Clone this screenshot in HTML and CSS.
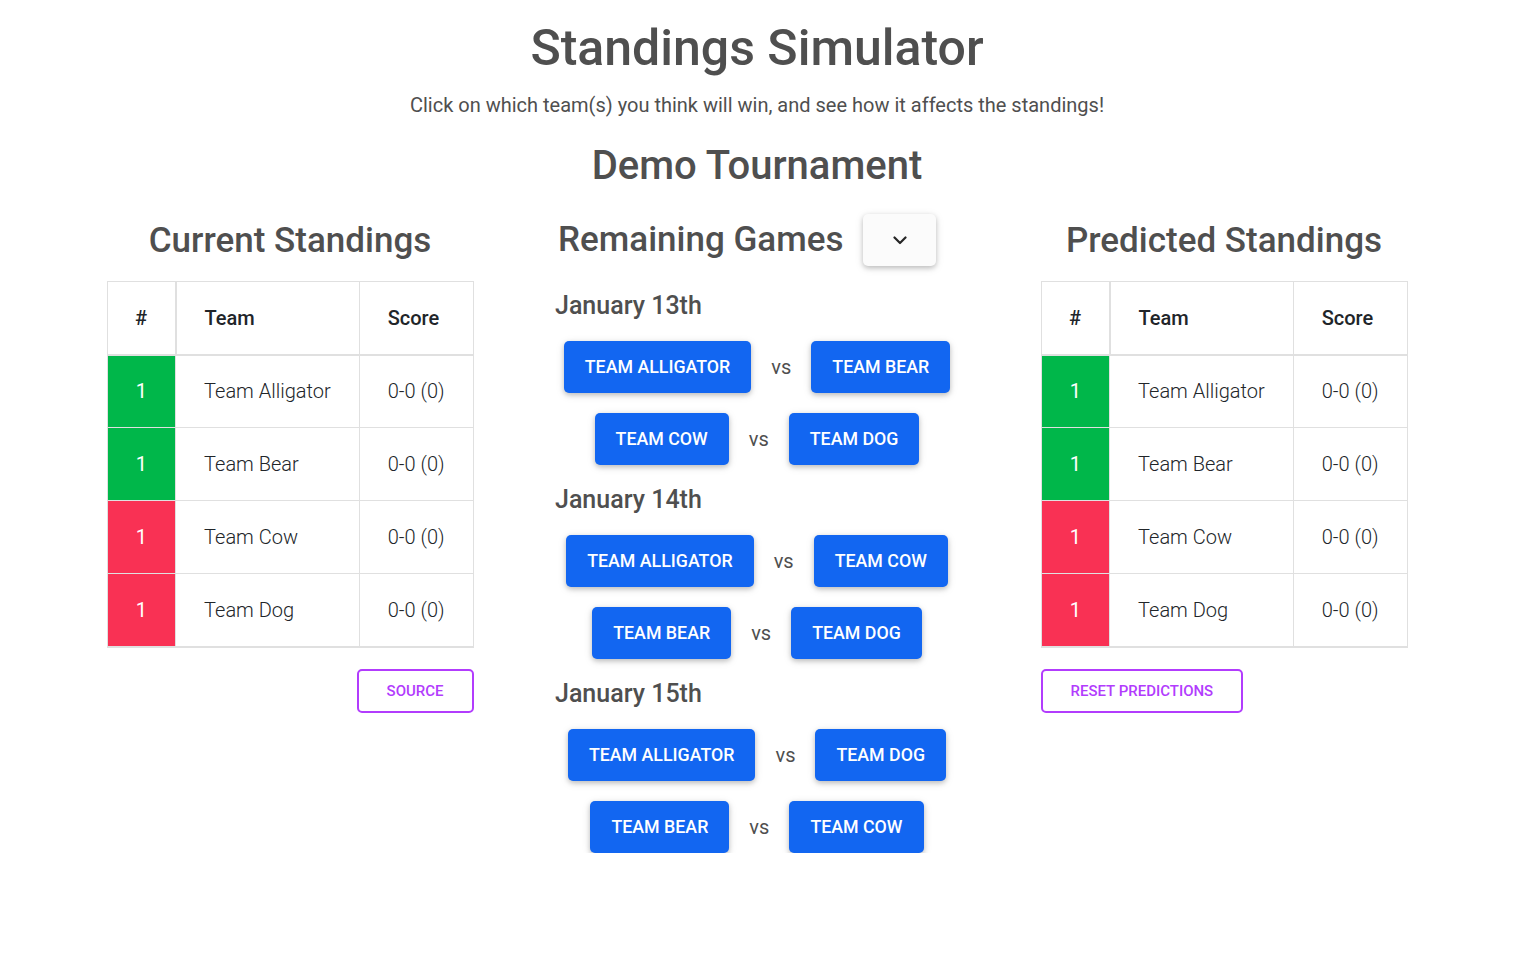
FILE: index.html
```html
<!DOCTYPE html>
<html lang="en">
<head>
    <meta charset="UTF-8">
    <meta name="viewport" content="width=device-width, initial-scale=1.0">
    <title>Standings Simulator</title>
    <link rel="stylesheet" href="styles.css">
</head>
<body>
<div class="page">
    <h1 class="title">Standings Simulator</h1>
    <p class="subtitle">Click on which team(s) you think will win, and see how it affects the standings!</p>
    <h2 class="tournament">Demo Tournament</h2>

    <div class="columns">
        <!-- current standings -->
        <div class="col">
            <div class="standings">
                <h3 class="col-title">Current Standings</h3>
                <table class="table">
                    <thead>
                        <tr><th class="rank-col">#</th><th class="team-col">Team</th><th>Score</th></tr>
                    </thead>
                    <tbody>
                        <tr><td class="rank win">1</td><td>Team Alligator</td><td>0-0 (0)</td></tr>
                        <tr><td class="rank win">1</td><td>Team Bear</td><td>0-0 (0)</td></tr>
                        <tr><td class="rank lose">1</td><td>Team Cow</td><td>0-0 (0)</td></tr>
                        <tr><td class="rank lose">1</td><td>Team Dog</td><td>0-0 (0)</td></tr>
                    </tbody>
                </table>
                <div class="actions actions-right">
                    <button class="btn-outline">Source</button>
                </div>
            </div>
        </div>

        <!-- remaining games -->
        <div class="col">
            <div class="games">
                <div class="games-head">
                    <h3 class="col-title">Remaining Games</h3>
                    <button class="btn-light" aria-label="toggle">
                        <svg width="14" height="9" viewBox="0 0 14 9"><polyline points="1.5,1.5 7,7 12.5,1.5" fill="none" stroke="#262626" stroke-width="2.2" stroke-linecap="round" stroke-linejoin="round"/></svg>
                    </button>
                </div>
                <div class="days">
                    <h5 class="day-title">January 13th</h5>
                    <div class="match"><button class="btn-team">Team Alligator</button><span class="vs">vs</span><button class="btn-team">Team Bear</button></div>
                    <div class="match"><button class="btn-team">Team Cow</button><span class="vs">vs</span><button class="btn-team">Team Dog</button></div>

                    <h5 class="day-title">January 14th</h5>
                    <div class="match"><button class="btn-team">Team Alligator</button><span class="vs">vs</span><button class="btn-team">Team Cow</button></div>
                    <div class="match"><button class="btn-team">Team Bear</button><span class="vs">vs</span><button class="btn-team">Team Dog</button></div>

                    <h5 class="day-title">January 15th</h5>
                    <div class="match"><button class="btn-team">Team Alligator</button><span class="vs">vs</span><button class="btn-team">Team Dog</button></div>
                    <div class="match"><button class="btn-team">Team Bear</button><span class="vs">vs</span><button class="btn-team">Team Cow</button></div>
                </div>
            </div>
        </div>

        <!-- predicted standings -->
        <div class="col">
            <div class="standings">
                <h3 class="col-title">Predicted Standings</h3>
                <table class="table">
                    <thead>
                        <tr><th class="rank-col">#</th><th class="team-col">Team</th><th>Score</th></tr>
                    </thead>
                    <tbody>
                        <tr><td class="rank win">1</td><td>Team Alligator</td><td>0-0 (0)</td></tr>
                        <tr><td class="rank win">1</td><td>Team Bear</td><td>0-0 (0)</td></tr>
                        <tr><td class="rank lose">1</td><td>Team Cow</td><td>0-0 (0)</td></tr>
                        <tr><td class="rank lose">1</td><td>Team Dog</td><td>0-0 (0)</td></tr>
                    </tbody>
                </table>
                <div class="actions">
                    <button class="btn-outline">Reset Predictions</button>
                </div>
            </div>
        </div>
    </div>
</div>
</body>
</html>
```

FILE: styles.css
```css
body {
    margin: 0;
    background-color: #fff;
    font-family: Roboto, "Liberation Sans", Arial, sans-serif;
    color: #4f4f4f;
}
.page {
    width: 1514px;
    padding-top: 18px;
}
h1, h2, h3, h5, p {
    margin: 0;
    font-weight: 500;
}
.title {
    text-align: center;
    font-size: 50px;
    line-height: 60px;
}
.subtitle {
    margin-top: 12px;
    text-align: center;
    font-size: 20px;
    line-height: 30px;
    font-weight: 400;
}
.tournament {
    margin-top: 22px;
    text-align: center;
    font-size: 40px;
    line-height: 48px;
}
.columns {
    display: grid;
    grid-template-columns: repeat(3, 467px);
    justify-content: center;
    margin-top: 23px;
}
.col {
    display: flex;
    justify-content: center;
}
.col-title {
    font-size: 35px;
    line-height: 42px;
}
.standings {
    width: 367px;
    padding-top: 7px;
}
.standings .col-title {
    text-align: center;
}
.table {
    width: 100%;
    margin-top: 19px;
    border-collapse: collapse;
    color: #212529;
    font-size: 20px;
    border: 1px solid #e0e0e0;
    border-bottom: 2px solid #e0e0e0;
}
.table th, .table td {
    box-sizing: border-box;
    height: 73px;
    padding: 0 28px;
    border: 1px solid #e0e0e0;
    text-align: left;
    vertical-align: middle;
    line-height: 30px;
    white-space: nowrap;
}
.table th {
    font-weight: 500;
}
.table td {
    font-weight: 300;
}
.table thead th {
    border-bottom: 2px solid #e0e0e0;
}
.table .rank-col {
    width: 69px;
    padding: 0;
    text-align: center;
    border-right: 2px solid #e0e0e0;
}
.table .team-col {
    width: 183px;
}
.table td.rank {
    padding: 0;
    text-align: center;
    color: #fff;
    font-weight: 400;
}
.win {
    background-color: #00b74a;
}
.lose {
    background-color: #f93154;
}
.actions {
    display: flex;
    margin-top: 21px;
}
.actions-right {
    justify-content: flex-end;
}
.btn-outline {
    font-family: inherit;
    font-size: 15px;
    font-weight: 500;
    line-height: 20px;
    text-transform: uppercase;
    color: #b23cfd;
    background: #fff;
    border: 2px solid #b23cfd;
    border-radius: 5px;
    padding: 10px 28px;
    cursor: pointer;
}
.games {
    width: 404px;
    padding-top: 1px;
}
.games-head {
    display: flex;
    align-items: center;
    padding-left: 3px;
}
.btn-light {
    width: 73px;
    height: 52px;
    margin-left: 20px;
    border: none;
    border-radius: 5px;
    background-color: #fbfbfb;
    box-shadow: 0 2px 5px 0 rgba(0, 0, 0, 0.2), 0 2px 10px 0 rgba(0, 0, 0, 0.1);
    display: flex;
    align-items: center;
    justify-content: center;
    cursor: pointer;
}
.days {
    display: flex;
    flex-direction: column;
    gap: 20px;
    margin-top: 25px;
}
.day-title {
    font-size: 25px;
    line-height: 30px;
}
.match {
    display: flex;
    justify-content: center;
    align-items: center;
}
.btn-team {
    font-family: inherit;
    font-size: 17.8px;
    font-weight: 500;
    line-height: 28px;
    text-transform: uppercase;
    color: #fff;
    background-color: #1266f1;
    border: none;
    border-radius: 5px;
    padding: 12px 21px;
    box-shadow: 0 2px 5px 0 rgba(0, 0, 0, 0.2), 0 2px 10px 0 rgba(0, 0, 0, 0.1);
    cursor: pointer;
}
.vs {
    margin: 0 20px;
    font-size: 20px;
    line-height: 30px;
}
```
